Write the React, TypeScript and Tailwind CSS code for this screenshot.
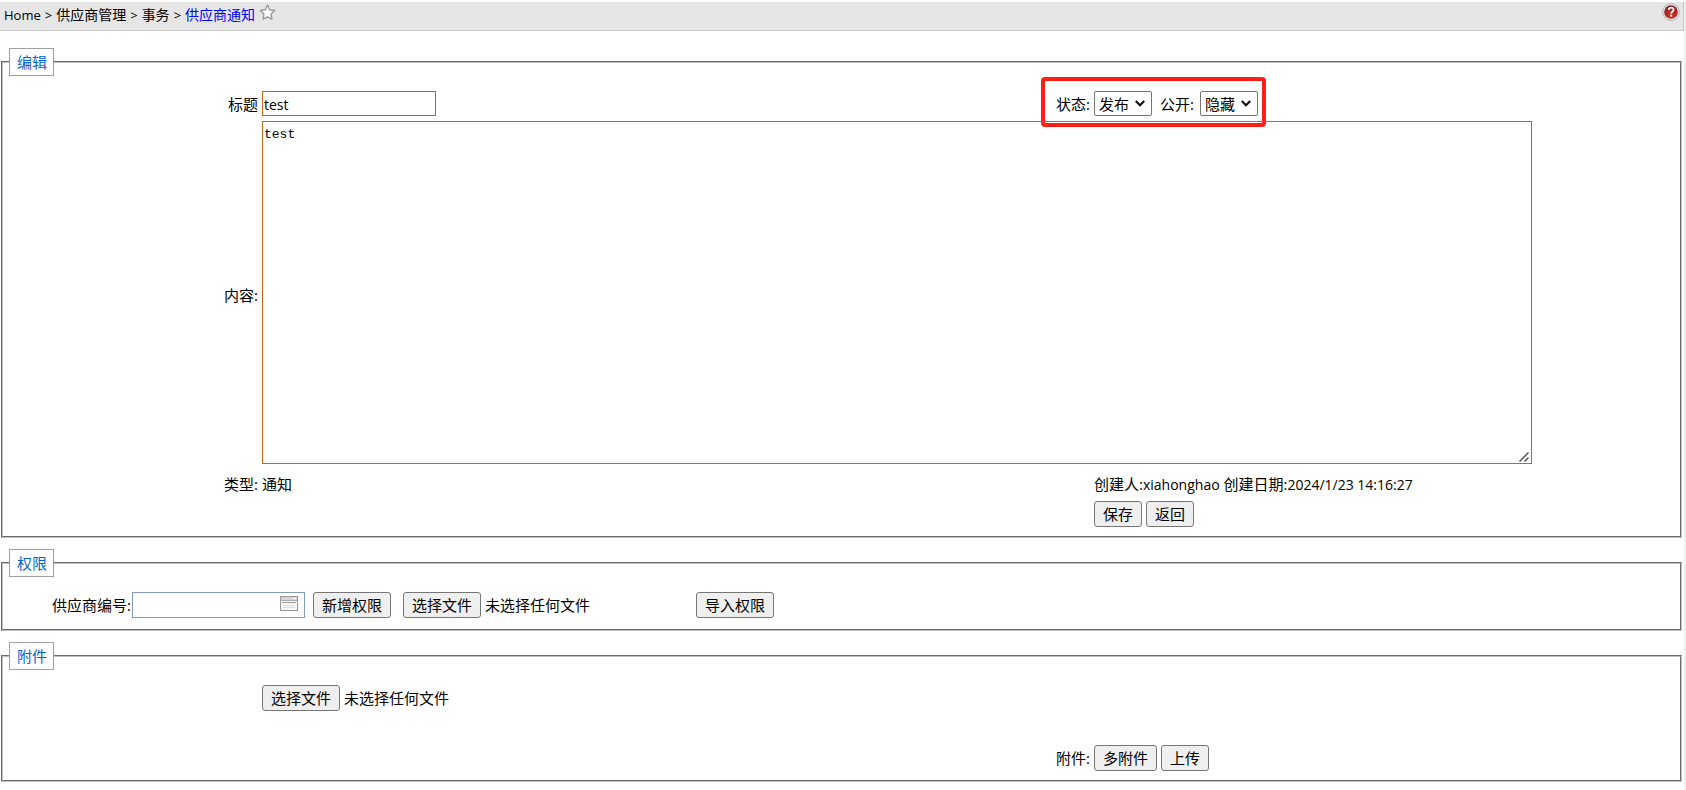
import type { ButtonHTMLAttributes, ReactNode } from "react";

function Panel({ title, className, children }: { title: string; className: string; children: ReactNode }) {
  return (
    <fieldset className={`mr-0.5 ml-px min-w-0 border-2 border-[#c0c0c0] [border-style:groove] ${className}`}>
      <legend className="ml-1.5 h-7 border border-[#a0a0a0] pr-1.5 pl-[7px] leading-[26px] text-[#0066cc]">{title}</legend>
      {children}
    </fieldset>
  );
}

const buttonLook =
  "inline-block h-[26px] shrink-0 whitespace-nowrap rounded-[3px] border border-[#767676] bg-[#efefef] px-2 text-[15px] leading-6 text-black hover:bg-[#e5e5e5]";

function Button(props: ButtonHTMLAttributes<HTMLButtonElement>) {
  return <button type="button" className={buttonLook} {...props} />;
}

function FilePicker({ id }: { id: string }) {
  return (
    <div className="relative flex items-center gap-1">
      <input id={id} type="file" className="sr-only" />
      <label htmlFor={id} className={buttonLook}>
        选择文件
      </label>
      <span className="whitespace-nowrap">未选择任何文件</span>
    </div>
  );
}

function Choice({ id, options }: { id: string; options: string[] }) {
  return (
    <div className="grid items-center">
      <select
        id={id}
        className="col-start-1 row-start-1 h-[25px] w-[58px] appearance-none rounded-[2px] border border-[#767676] bg-white pl-1 text-[15px] text-black"
      >
        {options.map((option) => (
          <option key={option}>{option}</option>
        ))}
      </select>
      <svg
        width="10"
        height="7"
        viewBox="0 0 10 7"
        aria-hidden="true"
        className="pointer-events-none col-start-1 row-start-1 mr-[7px] justify-self-end"
      >
        <path d="M0.8 1l4.2 4.2L9.2 1" fill="none" stroke="#111" strokeWidth="2.2" />
      </svg>
    </div>
  );
}

function StarIcon() {
  return (
    <svg width="17" height="17" viewBox="0 0 17 17" aria-hidden="true">
      <path
        d="M8.5 1.2l2.2 4.5 5 .8-3.6 3.5.8 5.2-4.4-2.4-4.4 2.4.8-5.2-3.6-3.5 5-.8z"
        fill="#fff"
        stroke="#999"
        strokeWidth="1.4"
        strokeLinejoin="round"
      />
    </svg>
  );
}

function HelpIcon() {
  return (
    <svg width="18" height="18" viewBox="0 0 18 18" aria-hidden="true">
      <defs>
        <radialGradient id="helpRed" cx="0.5" cy="0.8" r="0.8">
          <stop offset="0" stopColor="#cf3a33" />
          <stop offset="1" stopColor="#8c1616" />
        </radialGradient>
      </defs>
      <circle cx="9" cy="9" r="8.4" fill="#e4e7ea" stroke="#a9afb5" strokeWidth="0.9" />
      <circle cx="9" cy="9" r="6.8" fill="url(#helpRed)" />
      <path
        d="M6.6 7.1c0-1.6 1-2.5 2.5-2.5s2.5.9 2.5 2.2c0 1.7-2.4 1.8-2.4 3.7"
        fill="none"
        stroke="#fff"
        strokeWidth="1.7"
      />
      <rect x="8.2" y="11.7" width="1.9" height="1.8" fill="#fff" />
    </svg>
  );
}

function ListIcon() {
  return (
    <svg width="18" height="15" viewBox="0 0 18 15" aria-hidden="true">
      <rect x="0.5" y="0.5" width="17" height="14" fill="#f7f7f7" stroke="#999" />
      <rect x="1" y="1" width="16" height="3" fill="#d6d6d6" />
      <path d="M1 4.5h16" stroke="#aaa" />
      <path d="M13 2.5h3" stroke="#fff" />
      <path d="M2 6.5h14" stroke="#999" />
      <path d="M3 9.5h12M3 11.5h12" stroke="#ddd" />
    </svg>
  );
}

export default function App() {
  return (
    <div className="mt-0.5 min-h-[calc(100vh-2px)] border-r-2 border-[#f0f0f0] bg-white font-['Open_Sans','Noto_Sans_CJK_SC',sans-serif] text-[15px] leading-6 text-black">
      <header className="flex h-[29px] items-start justify-between border-r border-b border-[#c8c8c8] bg-[#e6e6e6] pr-[3px] pl-1">
        <nav className="flex gap-1 text-sm leading-[26px] whitespace-nowrap">
          <a href="#home" className="text-[13px]">Home</a>
          <span className="text-[13px]">&gt;</span>
          <a href="#suppliers">供应商管理</a>
          <span className="text-[13px]">&gt;</span>
          <a href="#affairs">事务</a>
          <span className="text-[13px]">&gt;</span>
          <a href="#notice" className="text-[#0000ff]">供应商通知</a>
          <button type="button" aria-label="收藏" className="h-5">
            <StarIcon />
          </button>
        </nav>
        <button type="button" aria-label="帮助" className="pt-px">
          <HelpIcon />
        </button>
      </header>

      <main className="flex flex-col gap-[11px] pt-[17px]">
        <Panel title="编辑" className="pb-[9px]">
          <div className="grid grid-cols-[255fr_828fr_586fr] gap-x-1 gap-y-1 pt-[15px]">
            <label htmlFor="title" className="text-right leading-[26px]">标题</label>
            <div className="flex h-[26px] items-start justify-between">
              <input
                id="title"
                defaultValue="test"
                className="h-[25px] w-[174px] border border-[#cc6600] px-px pt-0.5 text-sm"
              />
              <label htmlFor="status" className="leading-[26px]">状态:</label>
            </div>
            <div className="relative flex items-start">
              <Choice id="status" options={["发布", "草稿"]} />
              <label htmlFor="visible" className="mr-1.5 ml-2 leading-[26px]">公开:</label>
              <Choice id="visible" options={["隐藏", "公开"]} />
              <div className="pointer-events-none absolute -top-3.5 -left-[53px] h-[50px] w-[225px] rounded-[4px] border-4 border-[#ff1f14]" />
            </div>

            <label htmlFor="content" className="self-center text-right">内容:</label>
            <div className="col-span-2 pr-37 pb-1">
              <div className="relative">
                <textarea
                  id="content"
                  defaultValue="test"
                  className="block h-[343px] w-full resize-y border border-[#cc6600] px-px py-[3px] font-['Liberation_Mono',monospace] text-[13px] leading-5"
                />
                <svg
                  width="14"
                  height="14"
                  viewBox="0 0 14 14"
                  aria-hidden="true"
                  className="pointer-events-none absolute right-px bottom-px bg-white"
                >
                  <path d="M2.5 12.5l9-9M7.5 12.5l4-4" stroke="#555" strokeWidth="1.5" />
                </svg>
              </div>
            </div>

            <span className="text-right">类型:</span>
            <span>通知</span>
            <span className="whitespace-nowrap">
              创建人:<span className="text-sm">xiahonghao</span> 创建日期:
              <span className="text-sm">2024/1/23 14:16:27</span>
            </span>

            <div className="col-start-3 flex gap-1 pt-px">
              <Button>保存</Button>
              <Button>返回</Button>
            </div>
          </div>
        </Panel>

        <Panel title="权限" className="pb-[11px]">
          <div className="flex items-center pt-[15px] pl-[49px]">
            <label htmlFor="supplier" className="mr-px whitespace-nowrap">供应商编号:</label>
            <div className="mr-2 flex h-[26px] w-[173px] items-start border border-[#7f9db9]">
              <input id="supplier" className="h-6 min-w-0 flex-1 px-1" />
              <button type="button" aria-label="选择供应商" className="pt-[3px] pr-1.5">
                <ListIcon />
              </button>
            </div>
            <Button>新增权限</Button>
            <div className="mr-[106px] ml-3">
              <FilePicker id="import-file" />
            </div>
            <Button>导入权限</Button>
          </div>
        </Panel>

        <Panel title="附件" className="pb-[9px]">
          <div className="grid grid-cols-[255fr_828fr_586fr] gap-x-1 pt-[15px]">
            <div className="col-start-2 pb-[34px]">
              <FilePicker id="attachment-file" />
            </div>
            <span className="col-start-2 text-right leading-[26px]">附件:</span>
            <div className="flex gap-1">
              <Button>多附件</Button>
              <Button>上传</Button>
            </div>
          </div>
        </Panel>
      </main>
    </div>
  );
}
